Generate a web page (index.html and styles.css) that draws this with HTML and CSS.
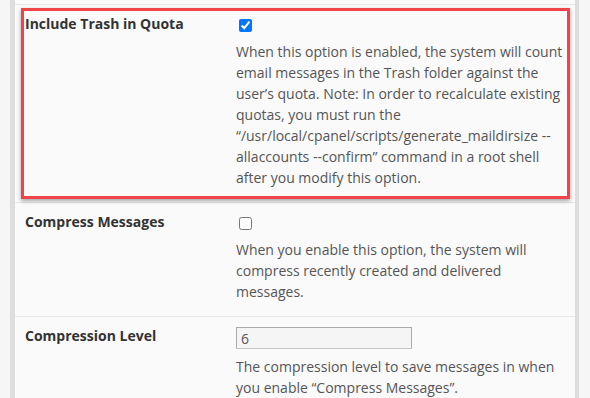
FILE: index.html
```html
<!DOCTYPE html>
<html lang="en">
<head>
  <meta charset="UTF-8" />
  <meta name="viewport" content="width=device-width, initial-scale=1.0" />
  <title>Mailserver Configuration</title>
  <link rel="stylesheet" href="styles.css">
</head>
<body>
  <div class="gutter"></div>
  <div class="bar"></div>

  <div class="panel">
    <div class="row-end"></div>

    <div class="row marked">
      <div class="label">Include Trash in Quota</div>
      <div class="value">
        <div class="check"><input type="checkbox" checked></div>
        <p class="help">When this option is enabled, the system will count email messages in the Trash folder against the user’s quota. Note: In order to recalculate existing quotas, you must run the “/usr/local/cpanel/scripts/generate_maildirsize --allaccounts --confirm” command in a root shell after you modify this option.</p>
      </div>
    </div>

    <div class="row">
      <div class="label">Compress Messages</div>
      <div class="value">
        <div class="check"><input type="checkbox"></div>
        <p class="help">When you enable this option, the system will compress recently created and delivered messages.</p>
      </div>
    </div>

    <div class="row">
      <div class="label">Compression Level</div>
      <div class="value">
        <input class="field" type="text" value="6">
        <p class="help">The compression level to save messages in when you enable “Compress Messages”.</p>
      </div>
    </div>
  </div>

  <div class="bar thin"></div>
  <div class="gutter"></div>
</body>
</html>
```

FILE: styles.css
```css
:root {
  --texto: #333;
  --ajuda: #555;
  --linha: #e8e8e8;
  --marca: #f2434b;
}

* {
  box-sizing: border-box;
  margin: 0;
  padding: 0;
}

html, body {
  height: 100%;
  overflow: hidden;
}

body {
  font-family: 'Open Sans', 'Noto Sans', sans-serif;
  font-size: 14px;
  line-height: 21px;
  background: #f6f6f6;
  color: var(--texto);
  display: flex;
}

.gutter {
  width: 10px;
  flex-shrink: 0;
}

.bar {
  width: 5px;
  background: #dddddd;
  flex-shrink: 0;
}

.bar.thin {
  width: 4px;
}

.panel {
  width: 560px;
  flex-shrink: 0;
  background: #fafafa;
}

.row-end {
  height: 5px;
  border-bottom: 1px solid var(--linha);
}

.row {
  display: grid;
  grid-template-columns: 211px 330px;
  padding: 8px 10px 14px;
  border-bottom: 1px solid var(--linha);
}

.row.marked {
  position: relative;
}

/* highlight drawn over the row */
.row.marked::after {
  content: '';
  position: absolute;
  top: 3px;
  left: 6px;
  right: 5px;
  bottom: 3px;
  border: 3px solid var(--marca);
  box-shadow: 0 2px 4px rgba(0, 0, 0, 0.35);
}

.label {
  font-weight: bold;
  color: var(--texto);
}

.check {
  height: 28px;
  padding: 6px 0 0 3px;
}

.check input {
  display: block;
  width: 13px;
  height: 13px;
  margin: 0;
}

.help {
  color: var(--ajuda);
}

.field {
  display: block;
  width: 176px;
  height: 22px;
  margin: 2px 0 7px;
  padding: 0 4px;
  border: 1px solid #a9a9a9;
  border-bottom-color: #c4c4c4;
  background: #f5f5f5;
  font-family: inherit;
  font-size: 14px;
  color: var(--ajuda);
}
```
